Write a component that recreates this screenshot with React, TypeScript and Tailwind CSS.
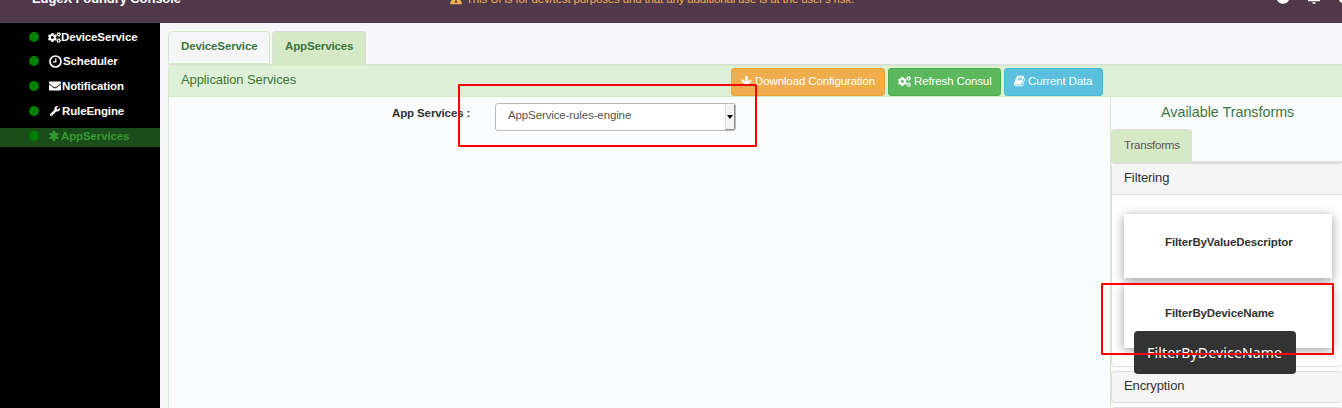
import React from "react";
import { FaCogs, FaWrench, FaEnvelope, FaExclamationTriangle, FaRegBell, FaCircle } from "react-icons/fa";

function Clock() {
  return (
    <svg viewBox="0 0 13 13" className="h-[13px] w-[13px]" fill="none" stroke="currentColor">
      <circle cx="6.5" cy="6.5" r="5.5" strokeWidth="1.7" />
      <path d="M6.8 3.2v3.7H4" strokeWidth="1.2" />
    </svg>
  );
}

function Asterisk() {
  return (
    <svg viewBox="0 0 10 10" className="h-[10px] w-[10px]" stroke="currentColor" strokeWidth="2.6">
      <path d="M5 0v10M.8 2.5l8.4 5M9.2 2.5l-8.4 5" />
    </svg>
  );
}

function ArrowDown() {
  return (
    <svg viewBox="0 0 11 10" className="h-[10px] w-[11px]" fill="none" stroke="currentColor">
      <path d="M5.5 0v8" strokeWidth="2.6" />
      <path d="M1 4.2l4.5 4.3L10 4.2" strokeWidth="2.4" />
    </svg>
  );
}

function Book() {
  return (
    <svg viewBox="0 0 1792 1792" className="h-3 w-3" fill="currentColor">
      <path d="M1639 478q40 57 18 129l-275 906q-19 64-76.5 107.5t-122.5 43.5h-923q-77 0-148.5-53.5t-99.5-131.5q-24-67-2-127 0-4 3-27t4-37q1-8-3-21.5t-3-19.5q2-11 8-21t16.5-23.5 16.5-23.5q23-38 45-91.5t30-91.5q3-10 .5-30t-.5-28q3-11 17-28t17-23q21-36 42-92t25-90q1-9-2.5-32t.5-28q4-13 22-30.5t22-22.5q19-26 42.5-84.5t27.5-96.5q1-8-3-25.5t-2-26.5q2-8 9-18t18-23 17-21q8-12 16.5-30.5t15-35 16-36 19.5-32 26.5-23.5 36-11.5 47.5 5.5l-1 3q38-9 51-9h761q74 0 114 56t18 130l-274 906q-36 119-71.5 153.5t-128.5 34.5h-869q-27 0-38 15-11 16-1 43 24 70 144 70h923q29 0 56-15.5t35-41.5l300-987q7-22 5-57 38 15 59 43zm-1064 2q-4 13 2 22.5t20 9.5h608q13 0 25.5-9.5t16.5-22.5l21-64q4-13-2-22.5t-20-9.5h-608q-13 0-25.5 9.5t-16.5 22.5zm-83 256q-4 13 2 22.5t20 9.5h608q13 0 25.5-9.5t16.5-22.5l21-64q4-13-2-22.5t-20-9.5h-608q-13 0-25.5 9.5t-16.5 22.5z" />
    </svg>
  );
}

const nav = [
  { label: "DeviceService", icon: <FaCogs className="h-[13px] w-[13px]" />, row: "h-6" },
  { label: "Scheduler", icon: <Clock />, row: "h-6 gap-px" },
  { label: "Notification", icon: <FaEnvelope className="h-[12px] w-[12px]" />, row: "h-[25px] gap-px" },
  { label: "RuleEngine", icon: <FaWrench className="h-[10px] w-[10px]" />, row: "h-[25px] gap-[2px]" },
];

export default function App() {
  return (
    <div className="relative flex h-[408px] w-[1342px] flex-col overflow-hidden bg-[#f7f7fa] font-['Liberation_Sans',sans-serif] text-[11.5px] leading-[16px] tracking-[-0.12px] text-[#333]">
      <header className="flex h-[23px] shrink-0 items-start bg-[#4f394b] text-white">
        <div className="-mt-[9px] ml-8 w-[418px] shrink-0 whitespace-nowrap text-[13px] font-bold tracking-[-0.1px]">EdgeX Foundry Console</div>
        <div className="-mt-[9px] flex w-[826px] shrink-0 items-center gap-1 whitespace-nowrap tracking-[-0.15px] text-[#f0ad4e]">
          <FaExclamationTriangle className="h-3 w-3" />
          <span>This UI is for dev/test purposes and that any additional use is at the user's risk.</span>
        </div>
        <div className="-mt-[10px] flex gap-[17px]">
          <FaCircle className="h-[14px] w-[14px] shrink-0" />
          <FaRegBell className="h-[14px] w-[14px] shrink-0" />
          <FaCircle className="h-[14px] w-[14px] shrink-0" />
        </div>
      </header>
      <div className="flex h-[385px]">
        <aside className="w-40 shrink-0 bg-black pt-[2px] font-bold text-white">
          {nav.map((n) => (
            <div key={n.label} className={`flex items-center pl-[29px] ${n.row}`}>
              <i className="mr-[9px] h-[10px] w-[10px] rounded-full bg-[#008000]" />
              {n.icon}
              <span>{n.label}</span>
            </div>
          ))}
          <div className="mt-[5px] flex h-[19px] items-center gap-[2px] bg-[#1b4d1b] pb-[3px] pl-[29px] text-[#339933]">
            <i className="mr-[8px] h-[10px] w-[10px] rounded-full bg-[#008000]" />
            <Asterisk />
            <span>AppServices</span>
          </div>
        </aside>
        <main className="flex min-w-0 flex-1 flex-col pl-2 pt-2">
          <nav className="flex h-[34px] shrink-0 gap-[2px] border-b border-[#ddd] font-bold text-[#3c763d]">
            <div className="w-[102px] rounded-t border border-[#d6e9c6] pl-3 pt-[6px]">DeviceService</div>
            <div className="-mb-px w-[94px] rounded-t border border-b-0 border-[#ddd] bg-[#d6e9c6] pl-3 pt-[6px]">AppServices</div>
          </nav>
          <section className="flex flex-1 flex-col rounded-tl border-l border-t border-[#d6e9c6] bg-[#fbfcfe]">
            <div className="flex h-[31px] shrink-0 border-b border-[#d6e9c6] bg-[#dff0d8]">
              <div className="w-[562px] pl-3 pt-[6px] text-[13px] tracking-[-0.1px] text-[#3c763d]">Application Services</div>
              <div className="mt-[2px] flex h-7 gap-[3px] text-white">
                <button className="flex w-[154px] items-center gap-[3px] rounded-[3px] border border-[#eea236] bg-[#f0ad4e] pb-[2px] pl-[9px]"><ArrowDown />Download Configuration</button>
                <button className="flex w-[113px] items-center gap-[3px] rounded-[3px] border border-[#4cae4c] bg-[#5cb85c] pb-[2px] pl-[9px] tracking-[-0.12px]"><FaCogs className="h-[13px] w-[13px]" />Refresh Consul</button>
                <button className="flex w-[99px] items-center gap-[2px] rounded-[3px] border border-[#46b8da] bg-[#5bc0de] pb-[2px] pl-[9px]"><Book />Current Data</button>
              </div>
            </div>
            <div className="flex flex-1">
              <div className="flex w-[941px] items-start pl-[223px] pt-2">
                <label className="w-[103px] font-bold">App Services :</label>
                <div className="-mt-[2px] flex h-7 w-[241px] overflow-hidden rounded-[3px] border border-[#bbb] bg-white text-[#555]">
                  <span className="flex-1 pl-3 pt-[3px]">AppService-rules-engine</span>
                  <span className="flex w-[10px] items-center justify-center border-b border-l border-r border-b-[#888] border-l-[#ddd] border-r-[#888] bg-[#f4f4f4] text-black"><svg viewBox="0 0 6 4" className="h-1 w-[6px]"><path d="M0 0h6L3 4z" fill="currentColor" /></svg></span>
                </div>
              </div>
              <aside className="flex flex-1 flex-col border-l border-[#d6e9c6]">
                <h3 className="h-8 pl-[50px] pt-[7px] text-[14.3px] tracking-normal text-[#3c763d]">Available Transforms</h3>
                <div className="flex h-[34px] border-b-2 border-[#ddd]"><div className="-mb-px w-[81px] rounded-t border border-b-0 border-[#ddd] bg-[#d6e9c6] pl-3 pt-[7px] tracking-[-0.2px] text-[#555]">Transforms</div></div>
                <div className="h-[204px] rounded border border-r-0 border-[#ddd] bg-white">
                  <div className="h-[31px] border-b border-[#ddd] bg-[#f5f5f5] pl-3 pt-[6px] text-[13px] tracking-[-0.1px]">Filtering</div>
                  <div className="flex flex-col gap-[7px] pl-3 pt-[19px] font-bold">
                    <div className="h-16 w-[208px] bg-white pl-[41px] pt-[20px] shadow-[0_2px_10px_rgba(0,0,0,0.4)]">FilterByValueDescriptor</div>
                    <div className="h-[63px] w-[208px] bg-white pl-[41px] pt-[20px] shadow-[0_2px_10px_rgba(0,0,0,0.4)]">FilterByDeviceName</div>
                  </div>
                </div>
                <div className="mt-1 h-8 rounded border border-r-0 border-[#ddd] bg-[#f5f5f5] pl-3 pt-[6px] text-[13px] tracking-[-0.1px]">Encryption</div>
                <div className="mt-1 h-8 rounded border border-r-0 border-[#ddd] bg-[#f5f5f5]" />
              </aside>
            </div>
          </section>
        </main>
      </div>
      <div className="absolute left-[1134px] top-[331px] h-[43px] w-[162px] rounded bg-[#333] pl-[13px] pt-[12px] font-['Noto_Sans',sans-serif] text-[14px] leading-[20px] tracking-[0.17px] text-white">FilterByDeviceName</div>
      <div className="absolute left-[458px] top-[84px] h-[63px] w-[299px] rounded-[1px] border-2 border-[#f00]" />
      <div className="absolute left-[1101px] top-[283px] h-[72px] w-[233px] rounded-[1px] border-2 border-[#f00]" />
    </div>
  );
}
